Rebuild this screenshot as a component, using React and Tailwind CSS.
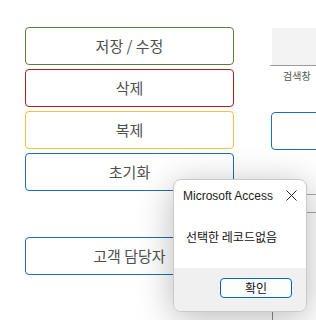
const KR = { fontFamily: '"Noto Sans CJK KR", "Liberation Sans", sans-serif' }

const BUTTONS = [
  { label: '저장 / 수정', border: 'border-[#5b7f3b]' },
  { label: '삭제', border: 'border-[#a81f26]' },
  { label: '복제', border: 'border-[#f4c03f]' },
  { label: '초기화', border: 'border-[#1e6eb5]' },
]

function FormButton({ label, border, className = '' }) {
  return (
    <div
      className={`h-[38px] rounded-[4px] border ${border} flex items-center justify-center text-[15px] text-[#505050] ${className}`}
      style={KR}
    >
      {label}
    </div>
  )
}

function MessageBox() {
  return (
    <div className="absolute left-[173px] top-[179px] w-[134px] h-[133px] rounded-[8px] border border-[#c9c9c9] bg-white shadow-[0_6px_36px_rgba(0,0,0,0.28)] overflow-hidden flex flex-col">
      <div className="h-[31px] flex items-center justify-between pl-[9px] pr-[9px]">
        <span className="text-[12px] text-[#1b1b1b]" style={{ fontFamily: '"Liberation Sans", Arial, sans-serif' }}>
          Microsoft Access
        </span>
        <svg className="w-[11px] h-[11px]" viewBox="0 0 11 11" fill="none" stroke="#222" strokeWidth="1">
          <path d="M0.5 0.5l10 10M10.5 0.5l-10 10" />
        </svg>
      </div>
      <div className="flex-1 flex items-center pl-[12px] pb-[6px] text-[12px] text-[#111]" style={KR}>
        선택한 레코드없음
      </div>
      <div className="h-[43px] bg-[#f0f0f0] flex justify-end pt-[10px] pr-[14px]">
        <div
          className="w-[72px] h-[20px] rounded-[4px] border border-[#0067c0] bg-[#fdfdfd] flex items-center justify-center text-[12px] text-[#111]"
          style={KR}
        >
          확인
        </div>
      </div>
    </div>
  )
}

export default function App() {
  return (
    <div className="relative w-[316px] h-[320px] bg-white overflow-hidden">
      <div className="flex pt-[27px]">
        <div className="ml-[25px] w-[209px] flex flex-col gap-[4px] shrink-0">
          {BUTTONS.map((b) => (
            <FormButton key={b.label} label={b.label} border={b.border} />
          ))}
          <FormButton label="고객 담당자" border="border-[#1e6eb5]" className="mt-[42px]" />
        </div>

        <div className="ml-[37px] flex-1 flex flex-col min-w-0">
          <div className="mt-[1px] ml-[1px] h-[37px] bg-[#f3f3f3]" />
          <div className="h-px bg-[#9a9a9a] -ml-[1px]" />
          <div className="pl-[12px] pt-[2px] h-[20px] text-[10px] leading-[16px] text-[#555]" style={KR}>
            검색창
          </div>
          <div className="mt-[26px] w-[70px] h-[38px] rounded-[4px] border border-[#1e6eb5]" />
          <div className="flex mt-[44px]">
            <div className="w-[35px] shrink-0" />
            <div className="flex-1 h-[19px] border-y border-[#a8a8a8]" />
          </div>
          <div className="w-px h-[120px] bg-[#8a8a8a] ml-[1px]" />
        </div>
      </div>
      <MessageBox />
    </div>
  )
}
